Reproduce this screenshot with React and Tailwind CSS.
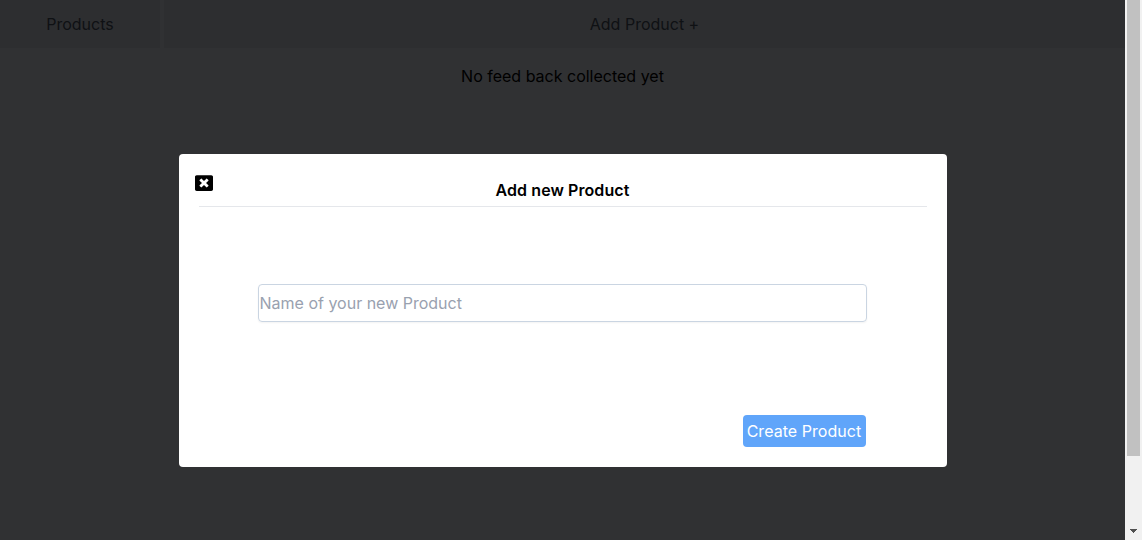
import React from "react";
import { FaWindowClose } from "react-icons/fa";

function Scrollbar() {
  return (
    <div className="flex h-full w-[17px] shrink-0 flex-col justify-between bg-[#f1f1f1]">
      <div className="ml-[2px] h-[456px] w-[13px] bg-[#c1c1c1]" />
      <svg className="mb-[7px] ml-[5px] h-[4px] w-[7px]" viewBox="0 0 7 4" shapeRendering="crispEdges">
        <path d="M0 0H7V1H6V2H5V3H4V4H3V3H2V2H1V1H0Z" fill="#505050" />
      </svg>
    </div>
  );
}

function ProductModal() {
  return (
    <div className="flex h-[313px] w-[768px] flex-col rounded bg-white px-5 pt-5">
      <div className="flex h-8 items-start">
        <button className="-ml-1 w-[18px] text-black" aria-label="Close">
          <FaWindowClose size={18} className="block" />
        </button>
        <h2 className="mr-[14px] flex-1 pt-1 text-center text-base font-semibold tracking-[0.08px] text-black">Add new Product</h2>
      </div>
      <hr className="border-gray-200" />
      <input
        type="text"
        placeholder="Name of your new Product"
        className="mx-[59px] mt-[77px] h-[38px] w-[609px] rounded border border-slate-300 pl-px text-base shadow-xs placeholder:text-gray-400 focus:outline-none"
      />
      <button className="mr-[61px] mt-[93px] h-8 w-[123px] self-end whitespace-nowrap rounded bg-[#60a5fa] text-base tracking-[0.05px] text-white">
        Create Product
      </button>
    </div>
  );
}

export default function App() {
  return (
    <div className="flex h-[540px] w-[1142px] overflow-hidden font-['Inter',sans-serif]">
      <div className="relative flex-1 bg-[#303133]">
        <header className="flex h-12 gap-1 text-base">
          <div className="flex w-40 items-center justify-center bg-[#2d2e30] text-[#0f1114]">Products</div>
          <div className="flex flex-1 items-center justify-center bg-[#2d2e30] text-[#0f1114]">Add Product +</div>
        </header>
        <p className="pt-4 text-center text-base text-black">No feed back collected yet</p>
        <div className="absolute inset-0 flex items-start justify-center pt-[154px]">
          <ProductModal />
        </div>
      </div>
      <Scrollbar />
    </div>
  );
}
